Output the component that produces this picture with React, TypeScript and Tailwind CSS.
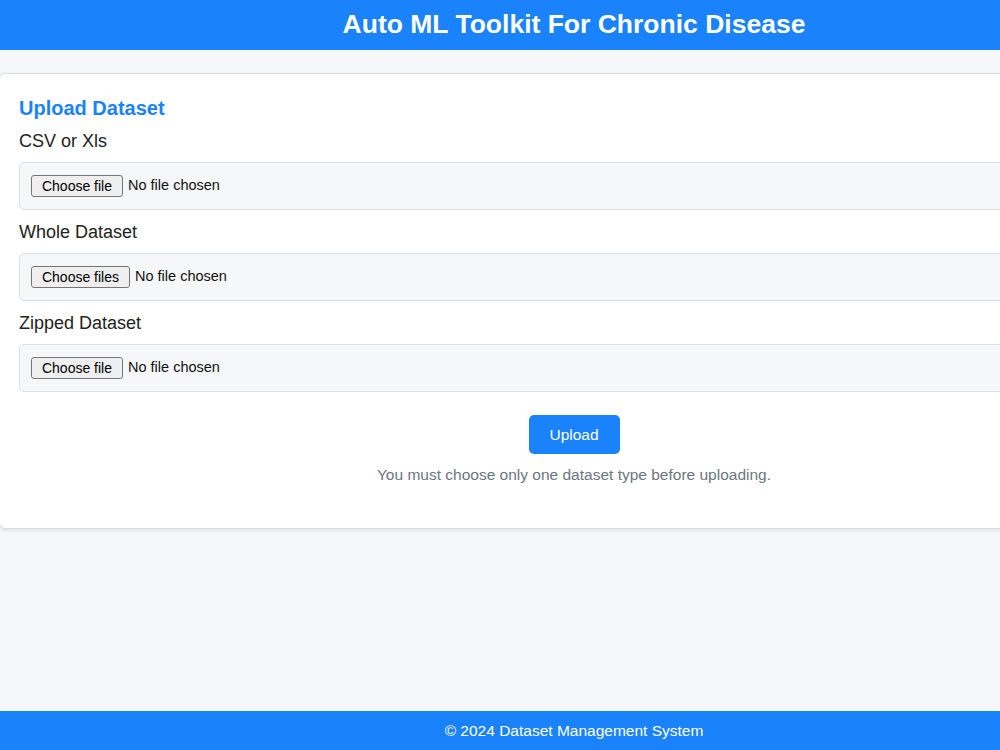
const fields = [
  { label: "CSV or Xls", button: "Choose file", multiple: false, w: "w-[92px]" },
  { label: "Whole Dataset", button: "Choose files", multiple: true, w: "w-[99px]" },
  { label: "Zipped Dataset", button: "Choose file", multiple: false, w: "w-[92px]" },
];

const App = () => {
  return (
    <div className="w-screen h-[750px] overflow-hidden bg-[#f6f7f9] font-['Liberation_Sans',Arial,sans-serif]">
      <div className="w-[1148px] h-full flex flex-col">
        <header className="h-[50px] bg-[#1a82fb] flex items-center justify-center">
          <h1 className="text-white text-[26.5px] font-bold">Auto ML Toolkit For Chronic Disease</h1>
        </header>

        <main className="flex-1 pt-[23px]">
          <div className="mx-[-1px] bg-white border border-[#d9dce0] rounded-[6px] shadow-[0_2px_4px_rgba(0,0,0,0.08)] px-[19px] pt-[22px] h-[456px]">
            <h2 className="text-[#1a82fb] text-[20px] font-bold leading-[24px]">Upload Dataset</h2>
            <div className="mt-[11px] flex flex-col">
              {fields.map((f) => (
                <div key={f.label} className="mb-[12px]">
                  <div className="text-[18px] text-[#222] leading-[20px] mb-[11px]">{f.label}</div>
                  <label className="h-[48px] bg-[#f6f7f9] border border-[#dcdfe3] rounded-[5px] px-[11px] flex items-center cursor-pointer">
                    <input type="file" multiple={f.multiple} className="hidden" />
                    <span
                      className={`${f.w} h-[22px] flex items-center justify-center rounded-[3px] border border-[#767676] bg-[#efefef] text-[14px] text-black`}
                    >
                      {f.button}
                    </span>
                    <span className="ml-[5px] text-[14.5px] text-[#111]">No file chosen</span>
                  </label>
                </div>
              ))}
            </div>
            <div className="flex flex-col items-center mt-[11px]">
              <button className="w-[91px] h-[39px] bg-[#1a82fb] text-white text-[15.5px] rounded-[5px]">Upload</button>
              <p className="mt-[9px] text-[15.5px] text-[#6c757d]">You must choose only one dataset type before uploading.</p>
            </div>
          </div>
        </main>

        <footer className="h-[39px] bg-[#1a82fb] flex items-center justify-center">
          <span className="text-white text-[15.5px]">© 2024 Dataset Management System</span>
        </footer>
      </div>
    </div>
  );
};

export default App;
